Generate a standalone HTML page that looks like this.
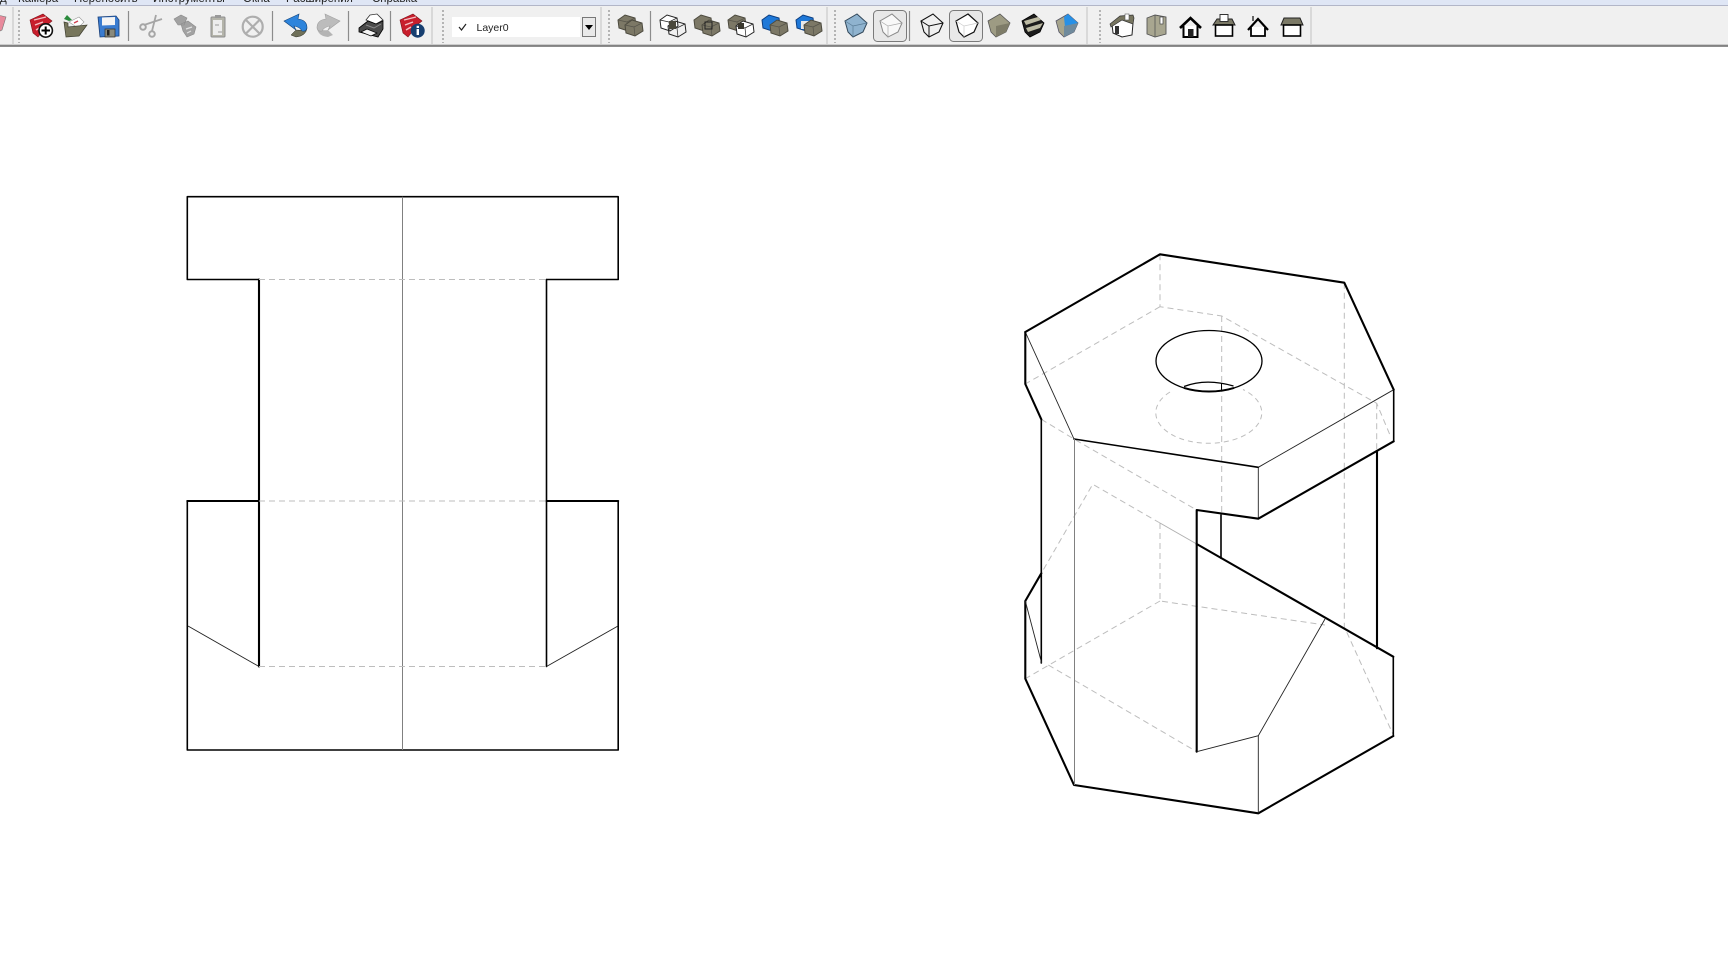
<!DOCTYPE html>
<html><head><meta charset="utf-8"><title>SketchUp</title>
<style>
html,body{margin:0;padding:0;background:#fff;width:1728px;height:961px;overflow:hidden}
svg{display:block;position:absolute;left:0;top:0}
.m{font:11.5px "Liberation Sans","Noto Sans CJK SC",sans-serif;fill:#222}
.k{fill:none;stroke:#000;stroke-width:1.6;stroke-linecap:round;stroke-linejoin:round}
.K{fill:none;stroke:#000;stroke-width:2.1;stroke-linecap:round;stroke-linejoin:round}
.t{fill:none;stroke:#222;stroke-width:.9}
.g{fill:none;stroke:#808080;stroke-width:1}
.d{fill:none;stroke:#bdbdbd;stroke-width:1;stroke-dasharray:6 4}
.grip{stroke:#b4b4b4;stroke-width:2;stroke-dasharray:2 2;fill:none}
.sep{stroke:#8c8c8c;stroke-width:1.2}
.div{stroke:#c9c9c9;stroke-width:1.2}
</style></head><body>
<svg width="1728" height="961" viewBox="0 0 1728 961" xmlns="http://www.w3.org/2000/svg">
<defs>
<path id="cb" d="M1-12L11-3L7 6L-3 11L-8 6L-11-5Z"/>
<path id="cf" d="M-11-5L-3 0L11-3M-3 0V11"/>
<path id="bx" d="M-9-3L-2-8L8-5L9 3L1 8L-8 5Z"/>
<path id="bl" d="M-9-3L0-1L8-5M0-1L1 8"/>
</defs>
<!-- top strip -->
<rect width="1728" height="5" fill="#dfe6f5"/>
<rect y="5" width="1728" height="1" fill="#b2b6c8"/>
<rect y="6" width="1728" height="39" fill="#f0f0f0"/>
<rect y="44.5" width="1728" height="1" fill="#a8a8a8"/>
<rect y="45.5" width="1728" height="1.2" fill="#5c5c5c"/>
<!-- menu -->
<text class="m" x="18" y="2">Камера</text>
<text class="m" x="74" y="2">Переносить</text>
<text class="m" x="153" y="2">Инструменты</text>
<text class="m" x="243" y="2">Окна</text>
<text class="m" x="286" y="2">Расширения</text>
<text class="m" x="372" y="2">Справка</text>
<text class="m" x="0" y="2">д</text>

<!-- dividers/grips -->
<line class="div" x1="13" y1="7" x2="13" y2="44"/>
<line class="div" x1="432" y1="7" x2="432" y2="44"/>
<line class="div" x1="601" y1="7" x2="601" y2="44"/>
<line class="div" x1="827" y1="7" x2="827" y2="44"/>
<line class="div" x1="1087" y1="7" x2="1087" y2="44"/>
<line class="div" x1="1311" y1="7" x2="1311" y2="44"/>
<path class="grip" d="M19 10V43M443 10V43M609 10V43M835 10V43M1100 10V43"/>
<path class="sep" d="M128.5 11V41M272.5 11V41M348.5 11V41M390.5 11V41M650.5 11V41M909.5 11V41"/>

<!-- pink cut icon -->
<path d="M-2 15L6 17L2 30L-2 32Z" fill="#e88a9c" stroke="#777" stroke-width=".6"/>

<!-- new -->
<path d="M30 20L43 14L52 21L47 25L42 32L38 37L33 33Z" fill="#c81e2c" stroke="#7d1018" stroke-width=".6"/>
<path d="M34 20L46 17M35 25L43 22M36 30L41 27" stroke="#f3c0c4" stroke-width="1.4"/>
<circle cx="45.7" cy="30.5" r="6.7" fill="#fff" stroke="#111" stroke-width="1.6"/>
<path d="M41.5 30.5H50M45.7 26.5V34.5" stroke="#000" stroke-width="2"/>
<!-- open -->
<path d="M64 19L67 15L72 20L69 21Z" fill="#2a8a3c"/>
<path d="M69 22L79 17L84 22L78 28Z" fill="#fff" stroke="#999" stroke-width=".6"/>
<path d="M74 23L78 21" stroke="#d04050" stroke-width="1.4"/>
<path d="M64 22L68 23L68 27L87 25L79 36L66 37Z" fill="#77765c" stroke="#3f3f30" stroke-width=".7"/>
<!-- save -->
<path d="M98 17L116 16L119 20L119 36L100 37Z" fill="#3a7cd0" stroke="#1a3f78" stroke-width=".8"/>
<path d="M102 17.5L115 17L115 25L102 25.5Z" fill="#f4f4f4"/>
<path d="M105 29H115V37H105Z" fill="#8a8a7c" stroke="#33322c" stroke-width=".7"/><rect x="107" y="30" width="2.5" height="5.5" fill="#222"/>
<!-- cut -->
<g fill="none" stroke="#a6a6a6" stroke-width="1.8"><path d="M144 25L162 19M156 15L152 31"/><circle cx="143" cy="27" r="2.8" stroke-width="2"/><circle cx="152" cy="34" r="2.8" stroke-width="2"/></g>
<!-- copy -->
<path d="M174 19L181 15L187 18L184 25L178 25ZM181 24L188 21L196 27L194 34L187 37L183 31Z" fill="#a2a2a2" stroke="#8a8a8a" stroke-width=".6"/>
<path d="M186 29L192 27M187 33L191 31" stroke="#e0e0e0" stroke-width="1.2"/>
<!-- paste -->
<rect x="211" y="17" width="14" height="20" rx="1" fill="#b4b4aa" stroke="#8e8e8e"/>
<rect x="213" y="20" width="9" height="15" fill="#ededed"/><rect x="215" y="15" width="6" height="3" fill="#999"/>
<path d="M215 25h4M218 32h4" stroke="#999"/>
<!-- delete -->
<circle cx="252.7" cy="26.7" r="10" fill="none" stroke="#aeaeae" stroke-width="2.2"/>
<path d="M246 20L259.5 33.5M259.5 20L246 33.5" stroke="#aeaeae" stroke-width="2.2"/>
<!-- undo -->
<path d="M307 28Q306 36 296 37L291 35L296 30Q303 31 307 28Z" fill="#6f7059" stroke="#2f2f25" stroke-width=".5"/>
<path d="M284 21L299 14L298 19Q307 20 307 28Q306 32 302 31Q300 27 294 26L296 30Z" fill="#2d84dc" stroke="#14447a" stroke-width=".6"/>
<!-- redo -->
<g transform="translate(624,0) scale(-1,1)"><path d="M307 28Q306 36 296 37L291 35L296 30Q303 31 307 28Z" fill="#b4b4b4"/><path d="M284 21L299 14L298 19Q307 20 307 28Q306 32 302 31Q300 27 294 26L296 30Z" fill="#bcbcbc" stroke="#a0a0a0" stroke-width=".6"/></g>
<!-- print -->
<path d="M370 15L377 14L383 20L376 24L366 20Z" fill="#fff" stroke="#333" stroke-width=".8"/>
<path d="M359 28L368 21L376 24L383 21L383 29L378 37L359 32Z" fill="#4a4a4a" stroke="#000" stroke-width=".8"/>
<path d="M361 32L371 36L377 33L367 29Z" fill="#f4f4f4" stroke="#000" stroke-width=".7"/>
<path d="M366 25L374 28L381 24" stroke="#8a8a8a" fill="none"/>
<!-- info -->
<path d="M400 20L413 14L422 21L417 25L412 32L408 37L403 33Z" fill="#c81e2c" stroke="#7d1018" stroke-width=".6"/>
<path d="M404 20L416 17M405 25L413 22M406 30L411 27" stroke="#f3c0c4" stroke-width="1.4"/>
<circle cx="417.7" cy="30.7" r="7" fill="#173f70"/>
<rect x="416.6" y="29" width="2.4" height="6" fill="#fff"/><rect x="416.6" y="25.8" width="2.4" height="2.2" fill="#fff"/>

<!-- layer combo -->
<rect x="452" y="17" width="128" height="20" fill="#fff"/>
<path d="M459 27L461.5 30L466 24" fill="none" stroke="#222" stroke-width="1.2"/>
<text x="476.5" y="31" font-family="Liberation Sans,sans-serif" font-size="10.5" fill="#222">Layer0</text>
<rect x="582.5" y="17.5" width="13" height="19" fill="#e9e9e9" stroke="#777"/>
<path d="M585 25H593L589 30Z" fill="#000"/>

<!-- group icons -->
<g transform="translate(627,23)"><use href="#bx" fill="#7c7866" stroke="#4c4a3e"/><use href="#bl" fill="none" stroke="#55534a" stroke-width=".7"/></g>
<g transform="translate(634,28)"><use href="#bx" fill="#7c7866" stroke="#4c4a3e"/><use href="#bl" fill="none" stroke="#55534a" stroke-width=".7"/></g>

<g transform="translate(669,23)"><use href="#bx" fill="#fff" stroke="#222"/><use href="#bl" fill="none" stroke="#222" stroke-width=".7"/></g>
<g transform="translate(677,29)"><use href="#bx" fill="none" stroke="#222"/><use href="#bl" fill="none" stroke="#222" stroke-width=".7"/></g>
<rect x="669" y="21" width="7" height="8" fill="#4a483c"/>

<g transform="translate(703,23)"><use href="#bx" fill="#7c7866" stroke="#4c4a3e"/></g>
<g transform="translate(711,28)"><use href="#bx" fill="#7c7866" stroke="#4c4a3e"/><use href="#bl" fill="none" stroke="#55534a" stroke-width=".7"/></g>
<rect x="705" y="22" width="7" height="7" fill="none" stroke="#222"/>

<g transform="translate(737,23)"><use href="#bx" fill="#7c7866" stroke="#4c4a3e"/><use href="#bl" fill="none" stroke="#55534a" stroke-width=".7"/></g>
<g transform="translate(745,29)"><use href="#bx" fill="#fff" stroke="#222"/><use href="#bl" fill="none" stroke="#222" stroke-width=".7"/></g>
<rect x="738" y="23" width="6" height="6" fill="#3a382e"/>

<g transform="translate(771,23)"><use href="#bx" fill="#1e78d8" stroke="#0d3e80"/></g>
<g transform="translate(779,28)"><use href="#bx" fill="#7c7866" stroke="#4c4a3e"/><use href="#bl" fill="none" stroke="#55534a" stroke-width=".7"/></g>

<g transform="translate(805,23)"><use href="#bx" fill="#1e78d8" stroke="#0d3e80"/></g>
<rect x="801" y="21" width="8" height="8" fill="#e8e8e8"/>
<g transform="translate(813,28)"><use href="#bx" fill="#7c7866" stroke="#4c4a3e"/><use href="#bl" fill="none" stroke="#55534a" stroke-width=".7"/></g>

<!-- style icons -->
<rect x="873.5" y="10.5" width="33" height="31" rx="4" fill="#e8e8e8" stroke="#7a7a7a"/>
<rect x="949.5" y="10.5" width="33" height="31" rx="4" fill="#e8e8e8" stroke="#7a7a7a"/>
<g transform="translate(856,26)"><use href="#cb" fill="#8fb3cf" stroke="#33485a" stroke-width="1"/><use href="#cf" fill="none" stroke="#5a7c96" stroke-width=".7"/></g>
<g transform="translate(891,26)"><use href="#cb" fill="#f8f8f8" stroke="#888" stroke-width="1"/><use href="#cf" fill="none" stroke="#aaa" stroke-width=".7"/></g>
<g transform="translate(932,26)"><use href="#cb" fill="none" stroke="#111" stroke-width="1.1"/><use href="#cf" fill="none" stroke="#111" stroke-width="1"/></g>
<g transform="translate(967,26)"><use href="#cb" fill="#fff" stroke="#111" stroke-width="1.2"/><use href="#cf" fill="none" stroke="#ccc" stroke-width=".7"/></g>
<g transform="translate(999,26)"><use href="#cb" fill="#9d9b83" stroke="#555" stroke-width=".8"/><path d="M-3 0L11-3L7 6L-3 11Z" fill="#7e7c68"/></g>
<g transform="translate(1033,26)"><use href="#cb" fill="#1c1c1c" stroke="#000" stroke-width=".8"/><path d="M-9-5L5-9L8-6L-7-1ZM-7 2L10-3L7 2L-5 6Z" fill="#bdbba4"/></g>
<g transform="translate(1067,26)"><use href="#cb" fill="#a6a48c" stroke="#556" stroke-width=".8"/><path d="M-3-9L1-12L11-3L-2 1Z" fill="#2790e6"/><path d="M-3 0L11-3L7 6L-3 11Z" fill="#6f8a9c"/></g>

<!-- view icons -->
<path d="M1112 24L1122 18L1133 23L1132 35L1122 37L1113 33Z" fill="#fff" stroke="#222" stroke-width="1"/>
<path d="M1110 24L1120 16L1133 15L1134 18L1133 24L1122 20L1111 27Z" fill="#77755f" stroke="#333" stroke-width=".7"/>
<rect x="1125" y="14" width="4" height="6" fill="#fff" stroke="#555" stroke-width=".6"/>
<rect x="1115" y="26" width="4" height="8" fill="#333"/>

<path d="M1147 18L1155 15L1166 17V34L1155 37L1147 34Z" fill="#a8a690" stroke="#555" stroke-width=".9"/>
<path d="M1155 15V37" stroke="#555" stroke-width=".8"/><rect x="1160" y="17" width="3" height="7" fill="#fff" stroke="#444" stroke-width=".7"/>

<path d="M1180 28L1190.5 18L1201 28" fill="none" stroke="#000" stroke-width="2.6"/>
<path d="M1183.5 26V37H1197.5V26" fill="#fff" stroke="#000" stroke-width="2"/>
<rect x="1188" y="29" width="5.5" height="8" fill="#222"/>

<path d="M1213 25L1217 19H1232L1235 25Z" fill="#7b7966" stroke="#222"/>
<rect x="1220" y="14.5" width="8" height="7" fill="#fff" stroke="#333"/>
<rect x="1215.5" y="25" width="17" height="11" fill="#fff" stroke="#000" stroke-width="1.6"/>

<path d="M1248 30L1258 19L1268 30" fill="none" stroke="#000" stroke-width="2.2"/>
<path d="M1251 27V36H1265V27" fill="#fff" stroke="#000" stroke-width="1.8"/>
<path d="M1253 21V16" stroke="#444" stroke-width="1.6"/>

<path d="M1281 25L1284 18H1300L1303 25Z" fill="#7b7966" stroke="#222"/>
<rect x="1283.5" y="25" width="17" height="11" fill="#fff" stroke="#000" stroke-width="1.6"/>

<!-- left drawing -->
<path class="k" d="M187.3 196.7H618.2V279.5H546.5M259 279.5H187.3V196.7"/>
<path class="K" d="M259 279.5V666.5"/>
<path class="k" d="M546.5 279.5V666.5"/>
<path class="K" d="M259 501H187.3M546.5 501H618.2" stroke-width="2"/>
<path class="k" d="M187.3 501V750H618.2V501"/>
<path class="t" d="M188 626L259 666.5M618 626L546.5 666.5"/>
<path class="g" d="M402.5 196.7V750"/>
<path class="d" d="M259 279.5H546.5M259 501H546.5M259 666.5H546.5"/>

<!-- right drawing: hidden -->
<g class="d">
<path d="M1160 254.3V306.7L1221.7 316L1376.7 403.3L1390.7 436.7"/>
<path d="M1160 306.7L1025.3 384"/>
<path d="M1041.3 419.3L1074 439L1196.7 510"/>
<path d="M1344.3 282.7V626.7L1393.3 735"/>
<path d="M1221.7 316V515"/>
<path d="M1376.7 403.3V451"/>
<path d="M1160 523V601L1325 625"/>
<path d="M1160 601L1025.3 678.7"/>
<path d="M1048.3 665L1196.7 751.7"/>
<path d="M1160 523L1092.7 484.3L1041.3 573.3"/>
<path d="M1170 392A53 30.5 0 1 0 1243 389.5" stroke-dasharray="5 4"/>
</g>
<path d="M1160 523L1196.7 544" fill="none" stroke="#b0b0b0" stroke-width="1"/>

<!-- right drawing: visible -->
<path class="K" d="M1025.3 332L1160 254.3L1344.3 282.7L1393.7 389.7" stroke-width="1.9"/>
<path class="t" d="M1393.7 389.7L1258.3 467.3"/>
<path class="k" d="M1258.3 467.3L1074 439" stroke-width="1.3"/>
<path class="t" d="M1074 439L1025.3 332"/>
<path class="K" d="M1025.3 332V384L1041.3 419.3M1041.3 573.3L1025.3 601V678.7L1074 785L1258.3 813.3L1393.3 736" stroke-width="2"/>
<path class="k" d="M1041.3 419.3V663" stroke-width="1.8"/>
<path class="k" d="M1393.7 389.7V441.3"  stroke-width="1.2"/>
<path class="g" d="M1074.5 439V785"/>
<path class="t" d="M1258.3 467.3V518.7" stroke-width="1.1"/>
<path class="K" d="M1393.7 441.3L1258.3 518.7L1196.7 510V751.7" stroke-width="1.9"/>
<path class="k" d="M1221 515V558.3"/>
<path class="K" d="M1377 451V648.3"/>
<path class="K" d="M1196.7 544L1393.3 656.7"/>
<path class="k" d="M1393.3 656.7V736" stroke-width="1"/>
<path class="t" d="M1196.7 751.7L1258.3 735.7L1325 619" stroke-width="1.1"/>
<path class="t" d="M1258.3 735.7V813.3" stroke-width="1.2"/>
<path class="t" d="M1025.3 601L1041.7 663.3" stroke-width="1.1"/>
<!-- hole -->
<ellipse cx="1209" cy="361" rx="53" ry="30.5" fill="none" stroke="#000" stroke-width="1.3"/>
<path d="M1184 387.9A53 30.5 0 0 0 1234 387.9" fill="none" stroke="#000" stroke-width="2"/>
<path d="M1184 386.5Q1206 378 1233.5 386" fill="none" stroke="#000" stroke-width="1.3"/>
<path d="M1221.5 383V391" stroke="#000" stroke-width="1"/>
</svg>
</body></html>
